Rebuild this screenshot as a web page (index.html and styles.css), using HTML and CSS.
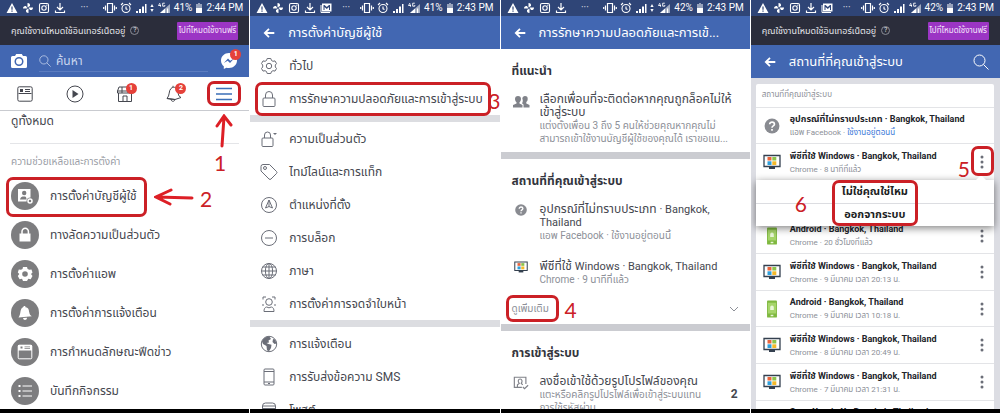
FILE: index.html
```html
<!DOCTYPE html>
<html lang="th">
<head>
<meta charset="utf-8">
<meta name="viewport" content="width=device-width, initial-scale=1">
<title>การตั้งค่าบัญชีผู้ใช้</title>
<link rel="stylesheet" href="styles.css">
</head>
<body>
<svg class="sprite" aria-hidden="true">
  <symbol id="warn" viewBox="0 0 12 12"><path fill="currentColor" fill-rule="evenodd" d="M6 1 11.5 11H.5ZM5.4 4.5v3.300h1.200V4.500ZM5.400 8.600v1.200h1.200V8.600Z"/></symbol>
  <symbol id="fan" viewBox="0 0 12 12"><path fill="currentColor" d="M5.500 5.500V1C7.500 1 8.300 2.300 8 4ZM6.500 5.500H11C11 7.500 9.700 8.300 8 8ZM6.500 6.500V11C4.500 11 3.700 9.700 4 8ZM5.500 6.500H1C1 4.500 2.300 3.700 4 4Z"/></symbol>
  <symbol id="insta" viewBox="0 0 12 12"><g fill="none" stroke="currentColor" stroke-width="1.1"><rect x="1.500" y="1.500" width="9" height="9" rx="1.500"/><circle cx="6" cy="6" r="2.200"/></g><circle cx="8.800" cy="3.200" r=".6" fill="currentColor"/></symbol>
  <symbol id="download" viewBox="0 0 12 12"><path fill="none" stroke="currentColor" stroke-width="1.200" d="M6 1v6.500M3 5l3 3 3-3M1.500 8.500v2h9v-2"/></symbol>
  <symbol id="mail" viewBox="0 0 12 12"><path fill="none" stroke="currentColor" d="M1 3v7.500h9"/><path fill="currentColor" fill-rule="evenodd" d="M2 1.500h9.500v8H2ZM3.500 3v5h1V5l2.300 2L9 5v3h1V3H9L6.800 5 4.500 3Z"/></symbol>
  <symbol id="vibrate" viewBox="0 0 14 12"><path fill="none" stroke="currentColor" stroke-width="1.200" d="M4.500 1.500h5v9h-5zM2.500 3.500v5M11.500 3.500v5M.7 5v2M13.300 5v2"/></symbol>
  <symbol id="alarm" viewBox="0 0 12 12"><g fill="none" stroke="currentColor" stroke-width="1.100"><circle cx="6" cy="6.500" r="4"/><path d="M6 4.500v2.300l1.500.8M1 3l2-2M11 3 9 1"/></g></symbol>
  <symbol id="signal" viewBox="0 0 12 12"><path fill="currentColor" d="M1 9h2v2H1zM4 7h2v4H4zM7 4.500h2V11H7zM10 2h1.500v9H10z"/></symbol>
  <symbol id="signal4g" viewBox="0 0 14 12"><path fill="currentColor" d="M3 11 13 2v9Z" opacity=".55"/><path fill="currentColor" d="M3 11 8 6.500V11ZM10 6.500h1.200V11H10z"/><path fill="none" stroke="currentColor" stroke-width=".9" d="M3 1 1.500 3.500H4M3.500 2.500v2.200M7.800 1.200H5.700v3h2.100V3"/></symbol>
  <symbol id="updown" viewBox="0 0 4 12"><path fill="currentColor" d="m2 2 1.600 3H.4ZM2 10 .4 7h3.200Z"/></symbol>
  <symbol id="battery" viewBox="0 0 8 12"><path fill="currentColor" opacity=".5" d="M3 1h2v1h2v4H1V2h2z"/><path fill="currentColor" d="M1 6h6v5H1z"/></symbol>
  <symbol id="back" viewBox="0 0 12 12"><path fill="none" stroke="currentColor" stroke-width="1.800" d="M11.300 6H2M6 1.800 1.800 6 6 10.200"/></symbol>
  <symbol id="search" viewBox="0 0 16 16"><g fill="none" stroke="currentColor"><circle cx="6.500" cy="6.500" r="5.500"/><path d="m10.500 10.500 5 5"/></g></symbol>
  <symbol id="camera" viewBox="0 0 16 16"><path fill="currentColor" fill-rule="evenodd" d="M1.500 3H4l1.200-2h5.600L12 3h2.500a1.500 1.500 0 0 1 1.500 1.500v9a1.500 1.500 0 0 1-1.500 1.500h-13A1.500 1.500 0 0 1 0 13.500v-9A1.500 1.500 0 0 1 1.500 3ZM8 4a4.500 4.500 0 1 0 0 9 4.500 4.500 0 0 0 0-9Zm0 1.500a3 3 0 1 1 0 6 3 3 0 0 1 0-6Z"/></symbol>
  <symbol id="messenger" viewBox="0 0 18 18"><path fill="currentColor" fill-rule="evenodd" d="M9 1C4.500 1 1 4.300 1 8.500c0 2.400 1.100 4.400 2.800 5.800V17l2.600-1.300c.8.200 1.700.3 2.600.3 4.500 0 8-3.300 8-7.500S13.500 1 9 1ZM3.800 11 8 6.500l2.200 2.200L14 6.500 10 11 7.700 8.800Z"/></symbol>
  <symbol id="feed" viewBox="0 0 16 16"><g fill="none" stroke="currentColor"><rect x=".8" y=".8" width="14.400" height="14.400" rx="1.500"/><path d="M8 3.500h5M8 5.500h5"/></g><path fill="currentColor" d="M3 3h3v3H3zM1.500 7h13v1h-13z"/></symbol>
  <symbol id="play" viewBox="0 0 18 18"><circle cx="9" cy="9" r="8" fill="none" stroke="currentColor"/><path fill="currentColor" d="m6.500 5 6 4-6 4z"/></symbol>
  <symbol id="shop" viewBox="0 0 16 16"><path fill="none" stroke="currentColor" d="M2 1h12l1.500 4v2h-15V5ZM1.500 7v8.500h13V7M.5 5h15M5 1v6M11 1v6M6 15v-5h4v5"/></symbol>
  <symbol id="bell" viewBox="0 0 18 18"><path fill="none" stroke="currentColor" d="M2 13.500c3-3 1.500-8 4-10C8 1.500 11 2 12.500 4.500c1 2.500 0 6.500 3.500 8L10 14.500ZM2 13.500 10 14.500M6 14c0 3 3.500 3 4 .5M8 2.300 8 .8"/></symbol>
  <symbol id="burger" viewBox="0 0 16 14"><path stroke="currentColor" stroke-width="1.300" d="M0 1.500h16M0 7h16M0 12.500h16"/></symbol>
  <symbol id="account" viewBox="0 0 16 16"><path fill="currentColor" fill-rule="evenodd" d="M1 1h12.500v8.500a4 4 0 0 0-4 4H1ZM7.200 2.800a2.200 2.200 0 1 0 0 4.400 2.200 2.200 0 0 0 0-4.400ZM3 11.500h6.500C9.500 9 8.500 8.500 7.200 8.500 5 8.500 3.500 9 3 11.500Z"/><circle cx="13" cy="13" r="2" fill="none" stroke="currentColor" stroke-width="1.500"/></symbol>
  <symbol id="lockfill" viewBox="0 0 16 16"><path fill="currentColor" d="M2.500 6.500h11v8h-11z"/><path fill="none" stroke="currentColor" stroke-width="1.500" d="M5 7V4.500a3.200 3.200 0 0 1 6.400 0V7"/></symbol>
  <symbol id="gearfill" viewBox="0 0 16 16"><path fill="currentColor" fill-rule="evenodd" d="m6 1h4l.6 2 1.700.8L14.500 3.500l1 3-1.500 1.500 1.500 2-1.800 3.200-2.400-.5L10 15H6l-1-2.300-2.400.5L.8 10l1.500-2L.8 6.500l1-3 2.200.3L5.500 3ZM8 5.200a2.800 2.800 0 1 0 0 5.600 2.800 2.800 0 0 0 0-5.600Z"/></symbol>
  <symbol id="bellfill" viewBox="0 0 16 16"><path fill="currentColor" d="M1.500 12.500C4 9.500 2.800 5 5 3c1-.9 1.500-.8 1.800-2h1.400l.3 1.200C12 3 11.800 5 12.300 7.500c.3 1.800 1 3 2.500 3.800ZM6 13l4-.3c0 2.800-3.700 3-4 .3Z"/></symbol>
  <symbol id="feedfill" viewBox="0 0 16 16"><rect x="1.200" y="1.200" width="13.600" height="13.600" rx="1" fill="none" stroke="currentColor"/><path fill="currentColor" fill-rule="evenodd" d="M1 1h14v5.500H1ZM3.500 2.500v2h2v-2ZM7.500 2.500v.8h5.500v-.8ZM7.500 4.300v.8h5.500v-.8Z"/></symbol>
  <symbol id="list" viewBox="0 0 16 16"><path stroke="currentColor" d="M5.500 3H15M5.500 8H15M5.500 13H15"/><path fill="currentColor" d="M1.500 2h2v2h-2zM1.500 7h2v2h-2zM1.500 12h2v2h-2z"/></symbol>
  <symbol id="gear" viewBox="0 0 18 18"><g fill="none" stroke="currentColor"><path stroke-linejoin="round" d="M7.200 1.500h3.600l.7 2 1.500.8 2-.4 1.500 2.700L15.300 8v2l1.200 1.500-1.500 2.600-2-.4-1.500.8-.7 2H7.200l-.7-2-1.500-.8-2 .4-1.500-2.600L2.700 10V8L1.500 6.600 3 3.900l2 .4 1.500-.8Z"/><circle cx="9" cy="9" r="2.700"/></g></symbol>
  <symbol id="lock" viewBox="0 0 18 18"><g fill="none" stroke="currentColor"><rect x="3" y="8" width="12" height="8.500" rx="1"/><path d="M5.500 8V5a3.500 3.500 0 0 1 7 0v3"/></g></symbol>
  <symbol id="lockdrop" viewBox="0 0 18 18"><g fill="none" stroke="currentColor"><rect x="2" y="8" width="11" height="8.500" rx="1"/><path d="M4.500 8V5a3 3 0 0 1 6 0v3"/></g><path fill="currentColor" d="M13 3h4l-2 2z"/></symbol>
  <symbol id="tag" viewBox="0 0 18 18"><g fill="none" stroke="currentColor"><path stroke-linejoin="round" d="M1 3.500V8l8 8q1 1 2 0l5.500-5.500q1-1 0-2L9.500 1.500H3Q1 1.500 1 3.500Z"/><circle cx="5" cy="5" r="1.500"/></g></symbol>
  <symbol id="place" viewBox="0 0 18 18"><g fill="none" stroke="currentColor"><circle cx="9" cy="9" r="7.500"/><path d="M9 4 5.500 12 9 10.500l3.500 1.500ZM9 4v6.500"/></g></symbol>
  <symbol id="block" viewBox="0 0 18 18"><g fill="none" stroke="currentColor"><circle cx="9" cy="9" r="7.500"/><path d="M5 9h8"/></g></symbol>
  <symbol id="globe" viewBox="0 0 18 18"><g fill="none" stroke="currentColor"><circle cx="9" cy="9" r="7.500"/><ellipse cx="9" cy="9" rx="3.600" ry="7.500"/><path d="M9 1.500v15M1.500 9h15M2.500 5h13M2.500 13h13"/></g></symbol>
  <symbol id="face" viewBox="0 0 18 18"><g fill="none" stroke="currentColor"><path d="M3 4.500V2h3M12 2h3v2.500M3 9v2M15 9v2"/><circle cx="9" cy="7" r="3.300"/><path d="M4 16.500c0-4 2-4.500 3-4.500 1.500 1 2.500 1 4 0 1 0 3 .5 3 4.500Z"/></g></symbol>
  <symbol id="earth" viewBox="0 0 18 18"><circle cx="9" cy="9" r="7.700" fill="none" stroke="currentColor"/><path fill="currentColor" d="M2 6.500C3 3.500 6 1.500 9.500 1.800L11 4 8.500 5.500l.5 2L6.500 8l2 1 3 .8-.5 3.200-2 3.200-2-1L6.500 11 3 9ZM13 4l2 .5 1.500 4-2 .5-2-2Z"/></symbol>
  <symbol id="phone" viewBox="0 0 18 18"><g fill="none" stroke="currentColor"><rect x="4" y="1" width="10" height="16" rx="1"/><path d="M4 3.500h10M4 14h10M8 15.500h2"/></g></symbol>
  <symbol id="feedtop" viewBox="0 0 18 18"><g fill="none" stroke="currentColor"><rect x="2.500" y="2" width="13" height="14" rx="3"/><path d="M3 5h12M3 7.500h12"/></g></symbol>
  <symbol id="people" viewBox="0 0 18 14"><path fill="currentColor" d="M6 1a3 3 0 0 1 3 3c0 1.500-.8 2.600-1.500 3.200V8.500l3 1.500v2.500H1V10l3.500-1.500V7.200C3.800 6.600 3 5.500 3 4a3 3 0 0 1 3-3ZM13 1a2.800 2.800 0 0 1 2.700 3c0 1.500-.7 2.500-1.400 3v1.400l3.200 1.600v2.500h-6V9.500L10 8.300c1-1.200 1-3 .3-4.800C10.500 2 11.500 1 13 1Z"/></symbol>
  <symbol id="question" viewBox="0 0 14 14"><circle cx="7" cy="7" r="5.800" fill="#898b91"/><path fill="none" stroke="#fff" stroke-width="1.300" d="M5.200 5.700c0-2.300 3.700-2.200 3.700-.1C8.900 7 7 6.800 7 8.300M7 9.300v1.300"/></symbol>
  <symbol id="windows" viewBox="0 0 18 16"><path fill="#fff" stroke="#34404f" stroke-width="1.300" d="M1 1.500h16v11H1z"/><path fill="#34404f" d="M6 13h6v2H6z"/><path fill="#e8643c" d="M4.500 3h4v3.500h-4z"/><path fill="#8bc34a" d="M9.300 3h4v3.500h-4z"/><path fill="#2fa0dc" d="M4.500 7.300h4V11h-4z"/><path fill="#f5b92a" d="M9.300 7.300h4V11h-4z"/></symbol>
  <symbol id="android" viewBox="0 0 12 20"><rect x=".5" y=".5" width="11" height="19" rx="1" fill="#7fb83f"/><path fill="#a6d56a" d="M1.500 3h9v12h-9z"/><path fill="#e9f7d8" d="M4 8a2 2 0 0 1 4 0v3H4zM4.500 16.500h3v1.500h-3z"/></symbol>
  <symbol id="profile" viewBox="0 0 18 16"><g fill="none" stroke="currentColor" stroke-width="1.300"><path d="M10 13H1.500V1.500h13V9"/><path d="M5 13V10l2-1.500C5 6 6 3.500 8 3.500s3 2.500 1.300 5L11 10"/><path d="m11 12.500 2 2 4-4"/></g></symbol>
  <symbol id="chevron" viewBox="0 0 10 6"><path fill="none" stroke="currentColor" d="m1 1 4 4 4-4"/></symbol>
  <symbol id="kebab" viewBox="0 0 4 14"><g fill="currentColor"><circle cx="2" cy="2" r="1.500"/><circle cx="2" cy="7" r="1.500"/><circle cx="2" cy="12" r="1.500"/></g></symbol>
</svg>

<div class="guide">

  <section class="phone">
    <div class="status">
      <svg class="ic"><use href="#warn"/></svg><svg class="ic"><use href="#fan"/></svg><svg class="ic"><use href="#insta"/></svg><svg class="ic"><use href="#download"/></svg>
      <span class="dots">···</span>
      <span class="sys"><svg class="ic wide"><use href="#vibrate"/></svg><svg class="ic"><use href="#alarm"/></svg><svg class="ic"><use href="#signal"/></svg><svg class="ic thin"><use href="#updown"/></svg><svg class="ic wide"><use href="#signal4g"/></svg><span>41%</span><svg class="ic slim"><use href="#battery"/></svg><span>2:44 PM</span></span>
    </div>
    <div class="databar"><span>คุณใช้งานโหมดใช้อินเทอร์เน็ตอยู่</span><span class="help">?</span><button type="button" class="free">ไปที่โหมดใช้งานฟรี</button></div>
    <header class="finder">
      <svg class="ic-16"><use href="#camera"/></svg>
      <label class="search"><svg class="ic"><use href="#search"/></svg><input type="search" placeholder="ค้นหา" aria-label="ค้นหา"></label>
      <span class="has-badge"><svg class="ic-18"><use href="#messenger"/></svg><b class="badge">1</b></span>
    </header>
    <nav class="tabs">
      <button type="button" aria-label="ฟีดข่าว"><svg class="ic-16"><use href="#feed"/></svg></button>
      <button type="button" aria-label="วิดีโอ"><svg class="ic-18"><use href="#play"/></svg></button>
      <button type="button" aria-label="ร้านค้า" class="has-badge"><svg class="ic-16"><use href="#shop"/></svg><b class="badge">1</b></button>
      <button type="button" aria-label="การแจ้งเตือน" class="has-badge"><svg class="ic-18"><use href="#bell"/></svg><b class="badge">2</b></button>
      <button type="button" aria-label="เมนู" class="current"><svg class="ic-16"><use href="#burger"/></svg><i class="ring ring-menu"></i></button>
      <svg class="arrow arrow-up" viewBox="0 0 18 34"><path d="M7 32 9 3M2 12 9 2l7 9"/></svg>
      <b class="step step-1">1</b>
    </nav>
    <div class="body">
      <a href="#" class="all">ดูทั้งหมด</a>
      <h2 class="group">ความช่วยเหลือและการตั้งค่า</h2>
      <a href="#" class="option"><span class="disc"><svg class="ic-16"><use href="#account"/></svg></span><span>การตั้งค่าบัญชีผู้ใช้</span><i class="ring ring-account"></i><svg class="arrow arrow-left" viewBox="0 0 40 18"><path d="M38 10 3 9M17 2 2 9l14 7"/></svg><b class="step step-2">2</b></a>
      <a href="#" class="option"><span class="disc"><svg class="ic-16"><use href="#lockfill"/></svg></span><span>ทางลัดความเป็นส่วนตัว</span></a>
      <a href="#" class="option"><span class="disc"><svg class="ic-16"><use href="#gearfill"/></svg></span><span>การตั้งค่าแอพ</span></a>
      <a href="#" class="option"><span class="disc"><svg class="ic-16"><use href="#bellfill"/></svg></span><span>การตั้งค่าการแจ้งเตือน</span></a>
      <a href="#" class="option"><span class="disc"><svg class="ic-16"><use href="#feedfill"/></svg></span><span>การกำหนดลักษณะฟีดข่าว</span></a>
      <a href="#" class="option"><span class="disc"><svg class="ic-16"><use href="#list"/></svg></span><span>บันทึกกิจกรรม</span></a>
    </div>
  </section>

  <section class="phone">
    <div class="status">
      <svg class="ic"><use href="#warn"/></svg><svg class="ic"><use href="#fan"/></svg><svg class="ic"><use href="#insta"/></svg><svg class="ic"><use href="#download"/></svg><svg class="ic"><use href="#mail"/></svg>
      <span class="dots">···</span>
      <span class="sys"><svg class="ic wide"><use href="#vibrate"/></svg><svg class="ic"><use href="#alarm"/></svg><svg class="ic"><use href="#signal"/></svg><svg class="ic wide"><use href="#signal4g"/></svg><span>41%</span><svg class="ic slim"><use href="#battery"/></svg><span>2:43 PM</span></span>
    </div>
    <header class="title"><button type="button" aria-label="กลับ"><svg class="ic"><use href="#back"/></svg></button><h1>การตั้งค่าบัญชีผู้ใช้</h1></header>
    <div class="body">
      <a href="#" class="setting"><svg class="ic-18"><use href="#gear"/></svg><span>ทั่วไป</span></a>
      <a href="#" class="setting"><svg class="ic-18"><use href="#lock"/></svg><span>การรักษาความปลอดภัยและการเข้าสู่ระบบ</span><i class="ring ring-security"></i><b class="step step-3">3</b></a>
      <div class="band"></div>
      <a href="#" class="setting"><svg class="ic-18"><use href="#lockdrop"/></svg><span>ความเป็นส่วนตัว</span></a>
      <a href="#" class="setting"><svg class="ic-18"><use href="#tag"/></svg><span>ไทม์ไลน์และการแท็ก</span></a>
      <a href="#" class="setting"><svg class="ic-18"><use href="#place"/></svg><span>ตำแหน่งที่ตั้ง</span></a>
      <a href="#" class="setting"><svg class="ic-18"><use href="#block"/></svg><span>การบล็อก</span></a>
      <a href="#" class="setting"><svg class="ic-18"><use href="#globe"/></svg><span>ภาษา</span></a>
      <a href="#" class="setting"><svg class="ic-18"><use href="#face"/></svg><span>การตั้งค่าการจดจำใบหน้า</span></a>
      <div class="band"></div>
      <a href="#" class="setting"><svg class="ic-18"><use href="#earth"/></svg><span>การแจ้งเตือน</span></a>
      <a href="#" class="setting"><svg class="ic-18"><use href="#phone"/></svg><span>การรับส่งข้อความ SMS</span></a>
      <a href="#" class="setting"><svg class="ic-18"><use href="#feedtop"/></svg><span>โพสต์</span></a>
    </div>
  </section>

  <section class="phone">
    <div class="status">
      <svg class="ic"><use href="#warn"/></svg><svg class="ic"><use href="#fan"/></svg><svg class="ic"><use href="#insta"/></svg><svg class="ic"><use href="#download"/></svg>
      <span class="dots">···</span>
      <span class="sys"><svg class="ic wide"><use href="#vibrate"/></svg><svg class="ic"><use href="#alarm"/></svg><svg class="ic"><use href="#signal"/></svg><svg class="ic thin"><use href="#updown"/></svg><svg class="ic wide"><use href="#signal4g"/></svg><span>42%</span><svg class="ic slim"><use href="#battery"/></svg><span>2:43 PM</span></span>
    </div>
    <header class="title"><button type="button" aria-label="กลับ"><svg class="ic"><use href="#back"/></svg></button><h1>การรักษาความปลอดภัยและการเข้...</h1></header>
    <div class="body">
      <section class="block">
        <h2>ที่แนะนำ</h2>
        <a href="#" class="entry"><svg class="ic-18"><use href="#people"/></svg><span class="words"><span>เลือกเพื่อนที่จะติดต่อหากคุณถูกล็อคไม่ให้<br>เข้าสู่ระบบ</span><small>แต่งตั้งเพื่อน 3 ถึง 5 คนให้ช่วยคุณหากคุณไม่<br>สามารถเข้าใช้งานบัญชีผู้ใช้ของคุณได้ เราขอแน...</small></span></a>
      </section>
      <div class="band dark"></div>
      <section class="block">
        <h2>สถานที่ที่คุณเข้าสู่ระบบ</h2>
        <a href="#" class="entry"><svg class="ic-14"><use href="#question"/></svg><span class="words"><span>อุปกรณ์ที่ไม่ทราบประเภท <span class="latin">· Bangkok,<br>Thailand</span></span><small>แอพ Facebook · ใช้งานอยู่ตอนนี้</small></span></a>
        <a href="#" class="entry"><svg class="ic-14"><use href="#windows"/></svg><span class="words"><span>พีซีที่ใช้ <span class="latin">Windows · Bangkok, Thailand</span></span><small>Chrome · 9 นาทีที่แล้ว</small></span></a>
        <button type="button" class="more"><span>ดูเพิ่มเติม</span><svg class="ic-10"><use href="#chevron"/></svg><i class="ring ring-more"></i><b class="step step-4">4</b></button>
      </section>
      <div class="band dark"></div>
      <section class="block">
        <h2>การเข้าสู่ระบบ</h2>
        <a href="#" class="entry"><svg class="ic-16"><use href="#profile"/></svg><span class="words"><span>ลงชื่อเข้าใช้ด้วยรูปโปรไฟล์ของคุณ</span><small>แตะหรือคลิกรูปโปรไฟล์เพื่อเข้าสู่ระบบแทน<br>การใช้รหัสผ่าน</small></span><b class="count">2</b></a>
      </section>
    </div>
  </section>

  <section class="phone">
    <div class="status">
      <svg class="ic"><use href="#warn"/></svg><svg class="ic"><use href="#fan"/></svg><svg class="ic"><use href="#insta"/></svg><svg class="ic"><use href="#download"/></svg><svg class="ic"><use href="#mail"/></svg>
      <span class="dots">···</span>
      <span class="sys"><svg class="ic wide"><use href="#vibrate"/></svg><svg class="ic"><use href="#alarm"/></svg><svg class="ic"><use href="#signal"/></svg><svg class="ic wide"><use href="#signal4g"/></svg><span>42%</span><svg class="ic slim"><use href="#battery"/></svg><span>2:43 PM</span></span>
    </div>
    <div class="databar"><span>คุณใช้งานโหมดใช้อินเทอร์เน็ตอยู่</span><span class="help">?</span><button type="button" class="free">ไปที่โหมดใช้งานฟรี</button></div>
    <header class="title"><button type="button" aria-label="กลับ"><svg class="ic"><use href="#back"/></svg></button><h1>สถานที่ที่คุณเข้าสู่ระบบ</h1><button type="button" aria-label="ค้นหา"><svg class="ic-16"><use href="#search"/></svg></button></header>
    <div class="body tray">
      <div class="card">
        <h2>สถานที่ที่คุณเข้าสู่ระบบ</h2>
        <div class="session"><svg class="device"><use href="#question"/></svg><span class="words"><b>อุปกรณ์ที่ไม่ทราบประเภท · Bangkok, Thailand</b><small>แอพ Facebook · <a href="#">ใช้งานอยู่ตอนนี้</a></small></span></div>
        <div class="session pc"><svg class="device"><use href="#windows"/></svg><span class="words"><b>พีซีที่ใช้ Windows · Bangkok, Thailand</b><small>Chrome · 8 นาทีที่แล้ว</small></span><button type="button" aria-label="ตัวเลือก"><svg class="dots-v"><use href="#kebab"/></svg></button>
          <div class="popup"><button type="button">ไม่ใช่คุณใช่ไหม</button><button type="button">ออกจากระบบ</button><i class="ring ring-popup"></i><span class="step step-6">6</span></div>
          <i class="ring ring-kebab"></i><span class="step step-5">5</span>
        </div>
        <div class="session pc"></div>
        <div class="session"><svg class="device"><use href="#android"/></svg><span class="words"><b>Android · Bangkok, Thailand</b><small>Chrome · 20 ชั่วโมงที่แล้ว</small></span><button type="button" aria-label="ตัวเลือก"><svg class="dots-v"><use href="#kebab"/></svg></button></div>
        <div class="session pc"><svg class="device"><use href="#windows"/></svg><span class="words"><b>พีซีที่ใช้ Windows · Bangkok, Thailand</b><small>Chrome · 9 มีนาคม เวลา 20:13 น.</small></span><button type="button" aria-label="ตัวเลือก"><svg class="dots-v"><use href="#kebab"/></svg></button></div>
        <div class="session"><svg class="device"><use href="#android"/></svg><span class="words"><b>Android · Bangkok, Thailand</b><small>Chrome · 9 มีนาคม เวลา 10:18 น.</small></span><button type="button" aria-label="ตัวเลือก"><svg class="dots-v"><use href="#kebab"/></svg></button></div>
        <div class="session pc"><svg class="device"><use href="#windows"/></svg><span class="words"><b>พีซีที่ใช้ Windows · Bangkok, Thailand</b><small>Chrome · 8 มีนาคม เวลา 20:49 น.</small></span><button type="button" aria-label="ตัวเลือก"><svg class="dots-v"><use href="#kebab"/></svg></button></div>
        <div class="session pc"><svg class="device"><use href="#windows"/></svg><span class="words"><b>พีซีที่ใช้ Windows · Bangkok, Thailand</b><small>Chrome · 7 มีนาคม เวลา 21:31 น.</small></span><button type="button" aria-label="ตัวเลือก"><svg class="dots-v"><use href="#kebab"/></svg></button></div>
        <div class="session"><svg class="device"><use href="#android"/></svg><span class="words"><b>Sony Xperia X · Bangkok, Thailand</b><small>Facebook</small></span></div>
      </div>
    </div>
  </section>
</div>
</body>
</html>
```
FILE: styles.css
```css
* { box-sizing: border-box; }

body {
  margin: 0;
  background: #fff;
  color: #45474f;
  font: 12px/16px Roboto, "Noto Sans Thai", "Noto Sans", sans-serif;
}

a { color: inherit; text-decoration: none; }
h1, h2 { margin: 0; font-size: inherit; }
small { font-size: 10px; }
i { font-style: normal; }
svg { display: block; flex: none; }
button {
  margin: 0;
  padding: 0;
  border: 0;
  background: none;
  color: inherit;
  font: inherit;
}

.sprite { position: absolute; width: 0; height: 0; }

.ic { width: 12px; height: 12px; }
.ic.wide { width: 14px; }
.ic.thin { width: 4px; }
.ic.slim { width: 8px; }
.ic-10 { width: 10px; height: 6px; }
.ic-14 { width: 14px; height: 14px; }
.ic-16 { width: 16px; height: 16px; }
.ic-18 { width: 18px; height: 18px; }

.guide {
  display: grid;
  grid-template-columns: repeat(4, 1fr);
  gap: 1px;
  height: 100vh;
}

.phone {
  display: flex;
  flex-direction: column;
  min-width: 0;
  overflow: hidden;
  border-bottom: 4px solid #000;
}

.phone > * { flex: none; }
.phone > .body { flex: 1; min-height: 0; white-space: nowrap; }

/* status bar */
.status {
  display: flex;
  align-items: center;
  gap: 4px;
  height: 16px;
  padding: 0 6px;
  background: #2f4577;
  color: #fff;
  font-size: 10px;
}
.dots { margin-left: auto; margin-right: auto; opacity: .8; }
.sys { display: flex; align-items: center; gap: 3px; }

.databar {
  display: flex;
  align-items: center;
  gap: 5px;
  height: 29px;
  padding: 0 11px;
  background: #2b2d3b;
  color: #e4e5ea;
  font-size: 9px;
  white-space: nowrap;
}
.help {
  width: 9px;
  height: 9px;
  border: 1px solid #8a8c96;
  border-radius: 50%;
  font-size: 7px;
  line-height: 7px;
  text-align: center;
}
.free {
  height: 18px;
  margin-left: auto;
  padding: 0 2px;
  border-radius: 1px;
  background: #9b35c4;
  color: #f6e6fb;
  font-size: 8px;
}

/* blue headers */
.finder {
  display: flex;
  align-items: center;
  gap: 12px;
  height: 32px;
  padding: 0 11px;
  background: #4267b2;
  color: #fff;
}
.search {
  display: flex;
  flex: 1;
  align-items: center;
  gap: 5px;
  min-width: 0;
  height: 22px;
  border-bottom: 1px solid #5b7cc0;
  color: #c9d5ee;
}
.search input {
  flex: 1;
  min-width: 0;
  padding: 0;
  border: 0;
  outline: 0;
  background: none;
  color: inherit;
  font: inherit;
}
.search input::placeholder { color: #c9d5ee; }

.title {
  display: flex;
  align-items: center;
  gap: 13px;
  height: 33px;
  padding: 0 11px 0 13px;
  background: #4267b2;
  color: #fff;
}
.title h1 { flex: 1; font-size: 13px; font-weight: 400; white-space: nowrap; }

.has-badge { position: relative; }
.badge {
  position: absolute;
  top: -3px;
  right: -3px;
  width: 11px;
  height: 11px;
  border-radius: 50%;
  background: #e5413a;
  color: #fff;
  font-size: 7px;
  line-height: 11px;
  text-align: center;
}

/* tab strip */
.tabs {
  position: relative;
  display: grid;
  grid-template-columns: repeat(5, 1fr);
  height: 34px;
  border-bottom: 1px solid #c9cbd0;
}
.tabs button { position: relative; display: grid; place-items: center; }
.tabs .badge { top: 6px; right: 13px; }
.tabs .current { color: #3b6fb8; }

/* main menu */
.all {
  display: block;
  height: 33px;
  margin: 0 10px;
  padding: 2px 1px;
  border-bottom: 1px solid #e4e5e8;
}
.group {
  height: 32px;
  padding: 10px 11px;
  color: #9b9ea6;
  font-size: 10px;
  font-weight: 400;
}
.option {
  position: relative;
  display: flex;
  align-items: center;
  gap: 11px;
  height: 39px;
  padding: 0 11px;
}
.disc {
  display: grid;
  place-items: center;
  width: 28px;
  height: 28px;
  border-radius: 50%;
  background: #7d7d7f;
  color: #fff;
}

/* account settings */
.setting {
  position: relative;
  display: flex;
  align-items: center;
  gap: 11px;
  height: 33px;
  padding: 0 10px;
}
.setting svg { color: #6b6e78; }
.band { height: 7px; background: #dcdde1; }
.band.dark { background: #cbccd1; }

/* security page */
.block { padding: 14px 11px 0; }
.block h2 { margin-bottom: 14px; color: #33353d; font-size: 12px; }
.entry {
  display: grid;
  grid-template-columns: 18px 1fr auto;
  column-gap: 10px;
  padding-bottom: 7px;
  line-height: 13px;
}
.entry + .entry { padding-top: 11px; }
.entry > svg { justify-self: center; color: #808289; }
.words { display: flex; flex-direction: column; min-width: 0; white-space: nowrap; }
.words small { color: #8d9098; line-height: 13px; }
.latin { font-size: 11px; }
.count { align-self: center; padding-right: 1px; color: #45474f; }
.more {
  position: relative;
  display: flex;
  align-items: center;
  justify-content: space-between;
  width: 100%;
  height: 31px;
  color: #8d9098;
  font-size: 10px;
}

/* sessions */
.tray { padding: 6px 6px 0 5px; background: #dcdde3; }
.card { border-radius: 2px; background: #fff; }
.card h2 { height: 23px; padding: 3px 6px; color: #8d9098; font-size: 8px; font-weight: 400; }
.session {
  position: relative;
  display: grid;
  grid-template-columns: 18px 1fr auto;
  align-items: center;
  column-gap: 9px;
  height: 36px;
  padding: 0 10px 0 7px;
  border-top: 1px solid #e3e4e7;
}
.session.pc { height: 37px; }
.words b { color: #22242a; font-size: 9px; line-height: 14px; }
.session small { font-size: 8px; }
.session small a { color: #3b78d8; }
.device { width: 18px; height: 18px; color: #898b91; }
.dots-v { width: 4px; height: 14px; color: #6b6e78; }

.popup {
  position: absolute;
  z-index: 1;
  top: 100%;
  left: 0;
  right: 0;
  background: #fff;
  box-shadow: 0 2px 8px rgba(0, 0, 0, .5);
}
.popup::before {
  position: absolute;
  top: -5px;
  right: 8px;
  border: 5px solid transparent;
  border-top: 0;
  border-bottom-color: #fff;
  content: "";
}
.popup button { display: block; width: 100%; height: 23px; color: #1d1f24; font-size: 11px; font-weight: 700; }
.popup button + button { border-top: 1px solid #dcdde1; }

/* red annotations */
.ring { position: absolute; z-index: 2; border: 3px solid #cb2026; border-radius: 7px; pointer-events: none; }
.ring-menu { inset: 4px 8px; }
.ring-account { top: 1px; bottom: -2px; left: 6px; width: 141px; }
.ring-security { inset: 0 9px -1px 5px; }
.ring-more { top: 2px; bottom: 2px; left: -6px; width: 53px; }
.ring-popup { top: 0; bottom: 0; left: 50%; width: 86px; margin-left: -43px; }
.ring-kebab { top: 2px; bottom: 4px; right: 0; width: 23px; }

.step {
  position: absolute;
  z-index: 2;
  color: #cb2026;
  font: 400 21px/20px Lato, sans-serif;
}
.step-1 { top: 76px; right: 23px; }
.step-2 { top: 13px; left: 200px; }
.step-3 { top: 9px; right: -1px; }
.step-4 { top: 7px; left: 53px; }
.step-5 { top: 15px; right: 24px; }
.step-6 { top: 14px; left: 39px; }

.arrow { position: absolute; z-index: 2; fill: none; stroke: #dd1f26; stroke-width: 3; stroke-linecap: round; }
.arrow-up { top: 37px; right: 16px; width: 18px; height: 34px; }
.arrow-left { top: 12px; left: 154px; width: 40px; height: 18px; }
```
